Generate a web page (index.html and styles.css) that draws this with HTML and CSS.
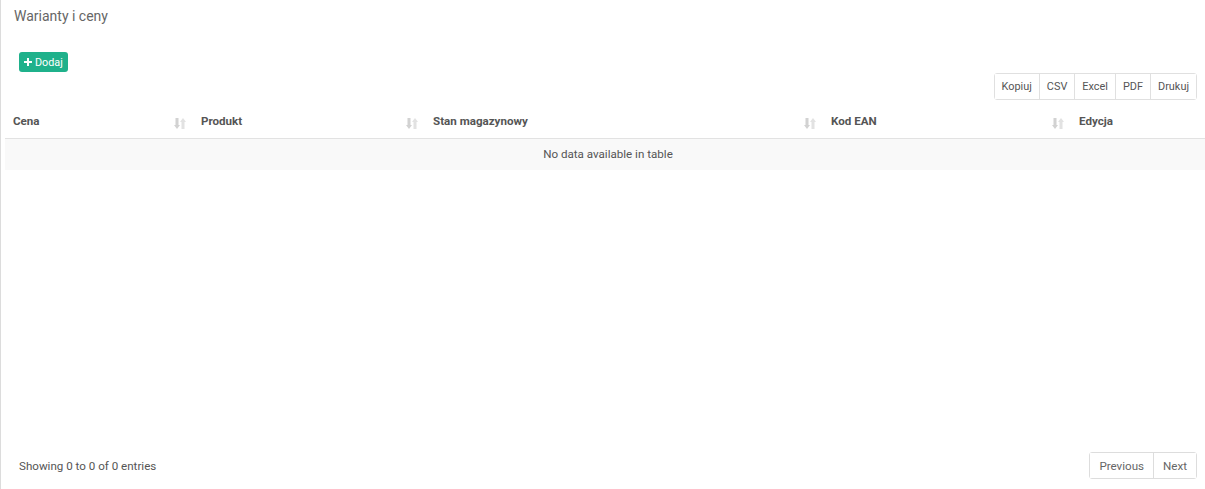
FILE: index.html
```html
<!DOCTYPE html>
<html lang="pl">
<head>
    <meta charset="UTF-8">
    <title>Warianty i ceny</title>
    <link rel="stylesheet" href="styles.css">
</head>
<body>
    <div class="box">
        <div class="box-header">
            <h3 class="box-title">Warianty i ceny</h3>
        </div>

        <div class="box-body">
            <button class="btn-add">
                <svg class="plus" viewBox="0 0 8 8" width="8" height="8"><path d="M3 0h2v3h3v2H5v3H3V5H0V3h3z" fill="#fff"/></svg>
                Dodaj
            </button>

            <div class="toolbar">
                <div class="btn-group">
                    <button class="btn-export">Kopiuj</button>
                    <button class="btn-export">CSV</button>
                    <button class="btn-export">Excel</button>
                    <button class="btn-export">PDF</button>
                    <button class="btn-export">Drukuj</button>
                </div>
            </div>

            <table class="data-table">
                <colgroup>
                    <col style="width: 188px">
                    <col style="width: 232px">
                    <col style="width: 398px">
                    <col style="width: 248px">
                    <col style="width: 140px">
                </colgroup>
                <thead>
                    <tr>
                        <th><span>Cena</span><svg class="sort" viewBox="0 0 12 11" width="12" height="11"><path d="M1.5 0h3v7h1.5L3 11 0 7h1.5z" fill="#d2d2d2"/><path d="M7.5 11h3V4H12L9 0 6 4h1.5z" fill="#e2e2e2"/></svg></th>
                        <th><span>Produkt</span><svg class="sort" viewBox="0 0 12 11" width="12" height="11"><path d="M1.5 0h3v7h1.5L3 11 0 7h1.5z" fill="#d2d2d2"/><path d="M7.5 11h3V4H12L9 0 6 4h1.5z" fill="#e2e2e2"/></svg></th>
                        <th><span>Stan magazynowy</span><svg class="sort" viewBox="0 0 12 11" width="12" height="11"><path d="M1.5 0h3v7h1.5L3 11 0 7h1.5z" fill="#d2d2d2"/><path d="M7.5 11h3V4H12L9 0 6 4h1.5z" fill="#e2e2e2"/></svg></th>
                        <th><span>Kod EAN</span><svg class="sort" viewBox="0 0 12 11" width="12" height="11"><path d="M1.5 0h3v7h1.5L3 11 0 7h1.5z" fill="#d2d2d2"/><path d="M7.5 11h3V4H12L9 0 6 4h1.5z" fill="#e2e2e2"/></svg></th>
                        <th><span>Edycja</span></th>
                    </tr>
                </thead>
                <tbody>
                    <tr class="odd">
                        <td colspan="5" class="empty">No data available in table</td>
                    </tr>
                </tbody>
            </table>
        </div>

        <div class="box-footer">
            <div class="info">Showing 0 to 0 of 0 entries</div>
            <div class="pagination">
                <button class="page-btn">Previous</button>
                <button class="page-btn">Next</button>
            </div>
        </div>
    </div>
</body>
</html>
```

FILE: styles.css
```css
body {
    margin: 0;
    font-family: Roboto, "Liberation Sans", Arial, sans-serif;
    background-color: #fff;
    color: #555;
}
.box {
    height: 489px;
    box-sizing: border-box;
    border-left: 1px solid #dcdcdc;
    display: flex;
    flex-direction: column;
    overflow: hidden;
}
.box-header {
    padding: 6px 13px 0;
}
.box-title {
    margin: 0;
    font-size: 14px;
    line-height: 20px;
    font-weight: 400;
    color: #666;
}
.box-body {
    padding: 26px 8px 0 4px;
}
.btn-add {
    display: flex;
    align-items: center;
    gap: 3px;
    margin-left: 14px;
    height: 20px;
    padding: 0 5px 0 5px;
    border: none;
    border-radius: 3px;
    background-color: #1fb18b;
    color: #fff;
    font-family: inherit;
    font-size: 10.8px;
    cursor: pointer;
}
.toolbar {
    display: flex;
    justify-content: flex-end;
    margin-top: 1px;
}
.btn-group {
    display: flex;
    border: 1px solid #e0e0e0;
    border-radius: 3px;
}
.btn-export {
    height: 25px;
    padding: 0 7px;
    border: none;
    border-left: 1px solid #e0e0e0;
    background: #fff;
    color: #555;
    font-family: inherit;
    font-size: 10.9px;
}
.btn-export:first-child {
    border-left: none;
}
.data-table {
    width: 1206px;
    table-layout: fixed;
    border-collapse: collapse;
    margin-top: 5px;
    font-size: 11.6px;
}
.data-table th {
    position: relative;
    text-align: left;
    padding: 8px 8px;
    line-height: 17px;
    font-weight: 700;
    color: #555;
    border-bottom: 1px solid #e2e2e2;
    white-space: nowrap;
}
.data-table th .sort {
    position: absolute;
    right: 7px;
    top: 13px;
}
.data-table td {
    padding: 8px;
    line-height: 15px;
}
.data-table tr.odd {
    background-color: #f9f9f9;
}
.empty {
    text-align: center;
    color: #555;
}
.box-footer {
    margin-top: auto;
    display: flex;
    justify-content: space-between;
    align-items: center;
    padding: 0 8px 10px 18px;
}
.info {
    font-size: 11.6px;
    color: #555;
}
.pagination {
    display: flex;
    border: 1px solid #ddd;
    border-radius: 3px;
}
.page-btn {
    height: 25px;
    padding: 0 9px;
    border: none;
    background: #fff;
    color: #666;
    font-family: inherit;
    font-size: 11.6px;
}
.page-btn + .page-btn {
    border-left: 1px solid #ddd;
}
```
